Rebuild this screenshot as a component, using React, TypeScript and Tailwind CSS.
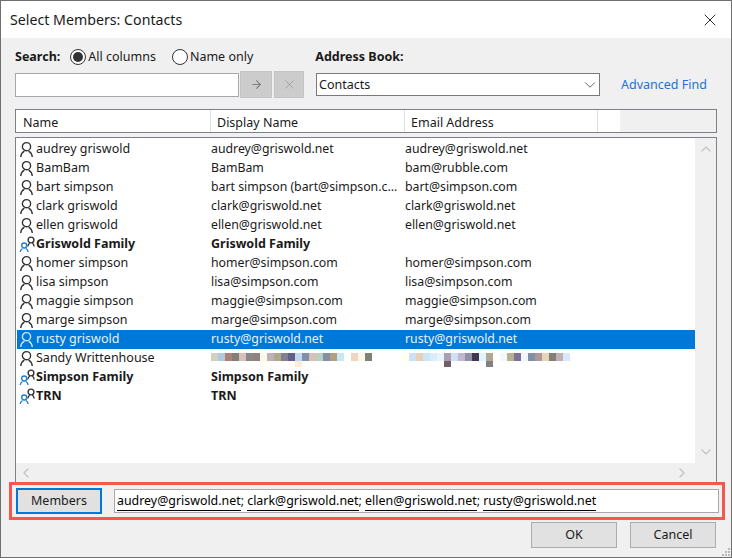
import React from "react";
import { ArrowRight, ChevronDown, ChevronLeft, ChevronRight, ChevronUp, X } from "lucide-react";

type Row = { name: string; display?: string; email?: string; group?: boolean; selected?: boolean; blurred?: boolean };

const rows: Row[] = [
  { name: "audrey griswold", display: "audrey@griswold.net", email: "audrey@griswold.net" },
  { name: "BamBam", display: "BamBam", email: "bam@rubble.com" },
  { name: "bart simpson", display: "bart simpson (bart@simpson.c...", email: "bart@simpson.com" },
  { name: "clark griswold", display: "clark@griswold.net", email: "clark@griswold.net" },
  { name: "ellen griswold", display: "ellen@griswold.net", email: "ellen@griswold.net" },
  { name: "Griswold Family", display: "Griswold Family", group: true },
  { name: "homer simpson", display: "homer@simpson.com", email: "homer@simpson.com" },
  { name: "lisa simpson", display: "lisa@simpson.com", email: "lisa@simpson.com" },
  { name: "maggie simpson", display: "maggie@simpson.com", email: "maggie@simpson.com" },
  { name: "marge simpson", display: "marge@simpson.com", email: "marge@simpson.com" },
  { name: "rusty griswold", display: "rusty@griswold.net", email: "rusty@griswold.net", selected: true },
  { name: "Sandy Writtenhouse", blurred: true },
  { name: "Simpson Family", display: "Simpson Family", group: true },
  { name: "TRN", display: "TRN", group: true },
];

// pixelated (redacted) address: one entry per block, the second colour hangs below it
type Cell = [string, string?];

const blurDisplay: Cell[] = [
  ["bg-[#d2d0c0]"], ["bg-[#b0c8e0]"], ["bg-[#b08078]"], ["bg-[#808078]"], ["bg-[#d8c0b8]"], ["bg-[#888888]"],
  ["bg-[#908080]"], ["bg-[#fbf8ec]", "bg-[#fffff0]"], ["bg-[#c0b0b8]"], ["bg-[#b0a888]"], ["bg-[#808090]"],
  ["bg-[#606088]"], ["bg-[#c0d8f0]", "bg-[#fdebd8]"], ["bg-[#8090a8]"], ["bg-[#d8c0b8]"], ["bg-[#b8d0c0]"],
  ["bg-[#8090a8]"], ["bg-[#b0a080]"], ["bg-[#c8e8f8]"], ["bg-white"], ["bg-[#f0d8c0]"], ["bg-[#fbf8e8]"],
  ["bg-[#808078]"],
];
const blurEmail: Cell[] = [
  ["bg-[#fffff0]"], ["bg-[#d0e0f4]"], ["bg-[#e8d0b8]"], ["bg-[#c8e8f8]"], ["bg-[#dcecfc]"], ["bg-[#e8f4fc]"],
  ["bg-[#a8a0b0]", "bg-[#706068]"], ["bg-[#d0e0f4]"], ["bg-[#c0b8d0]"], ["bg-[#9090a8]"], ["bg-[#403850]"],
  ["bg-[#e4f4fc]"], ["bg-[#b0a890]", "bg-[#808080]"], ["bg-white"], ["bg-[#f0fafc]"], ["bg-[#b8b090]"],
  ["bg-[#807098]"], ["bg-[#f0f8fc]"], ["bg-[#8090a8]"], ["bg-[#b09898]"], ["bg-[#e8d4b8]"], ["bg-[#808078]"],
  ["bg-[#c0b0b0]"], ["bg-[#d8e8fc]"],
];

function PersonIcon({ light }: { light?: boolean }) {
  const color = light ? "#cfe4f7" : "#333333";
  return (
    <svg width="16" height="17" viewBox="0 0 16 17" fill="none" stroke={color} strokeWidth="1.4" className="-mt-[2px] shrink-0">
      <circle cx="6.500" cy="6.700" r="4.100" />
      <path d="M.7 17c.3-2.800 1.800-4.800 3.700-5.800M12.300 17c-.3-2.800-1.800-4.800-3.700-5.800" />
    </svg>
  );
}

function GroupIcon() {
  return (
    <svg width="16" height="17" viewBox="-1 0 16 17" fill="none" strokeWidth="1.4" className="-mt-[2px] shrink-0 overflow-visible">
      <g stroke="#333333">
        <circle cx="10" cy="5" r="2.900" />
        <path d="M6.800 11.500c.2-1.700.9-2.800 1.900-3.500M13.200 11.500c-.2-1.700-.9-2.800-1.900-3.500" />
      </g>
      <g stroke="#1f7fd0">
        <circle cx="3.200" cy="10.500" r="2.500" />
        <path d="M-.700 17c.1-1.700.9-2.800 2.200-3.500M7.100 17c-.1-1.700-.9-2.800-2.200-3.500" />
      </g>
    </svg>
  );
}

function Radio({ checked, label }: { checked?: boolean; label: string }) {
  return (
    <div className="flex items-center gap-[2px]">
      <span className="flex h-[16px] w-[16px] items-center justify-center rounded-full border border-[#333333] bg-white">
        {checked && <span className="h-[10px] w-[10px] rounded-full bg-[#333333]" />}
      </span>
      <span>{label}</span>
    </div>
  );
}

function Blur({ cells }: { cells: Cell[] }) {
  return (
    <div className="flex h-[14px] self-start">
      {cells.map(([top, below], i) => (
        <span key={i} className="flex w-[7px] flex-col">
          <span className={`h-[8px] ${top}`} />
          {below && <span className={`h-[6px] ${below}`} />}
        </span>
      ))}
    </div>
  );
}

function ContactRow({ row }: { row: Row }) {
  const cellText = row.group ? "" : "text-[12.3px]";
  return (
    <div
      className={`flex h-[19px] items-center pl-[3px] ${row.selected ? "bg-[#0078d7] text-[#e8f2fb]" : "text-[#1a1a1a]"} ${row.group ? "font-bold" : ""}`}
    >
      {row.group ? <GroupIcon /> : <PersonIcon light={row.selected} />}
      <span className="w-[175px] shrink-0 whitespace-nowrap">{row.name}</span>
      {row.blurred ? (
        <>
          <div className="flex w-[191px] shrink-0 self-start pt-[4px]"><Blur cells={blurDisplay} /></div>
          <div className="flex self-start pt-[4px]"><Blur cells={blurEmail} /></div>
        </>
      ) : (
        <>
          <span className={`w-[194px] shrink-0 whitespace-nowrap ${cellText}`}>{row.display}</span>
          <span className={`whitespace-nowrap ${cellText}`}>{row.email}</span>
        </>
      )}
    </div>
  );
}

const members = ["audrey@griswold.net", "clark@griswold.net", "ellen@griswold.net", "rusty@griswold.net"];

export default function App() {
  return (
    <div className="flex h-[558px] w-[732px] flex-col border border-[#6f6f6f] bg-[#f0f0f0] text-[12.5px] leading-none text-[#1a1a1a] [font-family:'Noto_Sans','Open_Sans',sans-serif]">
      {/* title bar */}
      <div className="flex h-[37px] shrink-0 items-center justify-between bg-white pl-[9px] pr-[11px]">
        <span className="pt-[1px] text-[14.2px]">Select Members: Contacts</span>
        <X size={20} strokeWidth={1} className="text-black" />
      </div>

      {/* search */}
      <div className="mt-[10px] flex h-[18px] items-center pl-[14px]">
        <span className="mr-[10px] font-bold">Search:</span>
        <Radio checked label="All columns" />
        <div className="w-[16px]" />
        <Radio label="Name only" />
        <span className="ml-[62px] font-bold">Address Book:</span>
      </div>
      <div className="mt-[6px] flex h-[25px] items-center pl-[14px]">
        <div className="h-[24px] w-[224px] border border-[#a8a8a8] bg-white" />
        <button className="ml-[1px] flex h-[27px] w-[32px] items-center justify-center border border-[#c4c4c4] bg-[#cccccc] text-[#808080]">
          <ArrowRight size={13} />
        </button>
        <button className="ml-[2px] flex h-[27px] w-[30px] items-center justify-center border border-[#c4c4c4] bg-[#cccccc] text-[#8c8c8c]">
          <X size={15} strokeWidth={1} />
        </button>
        <div className="ml-[12px] flex h-[23px] w-[284px] items-center justify-between border border-[#7a7a7a] bg-white pl-[2px]">
          <span className="pt-[2px]">Contacts</span>
          <ChevronDown size={18} strokeWidth={1} className="text-[#333333]" />
        </div>
        <span className="ml-[21px] pt-[2px] text-[#1a73d8]">Advanced Find</span>
      </div>

      {/* column headers */}
      <div className="ml-[14px] mt-[12px] flex h-[24px] w-[702px] items-center border border-[#7f7f87] bg-white">
        <span className="flex h-full w-[195px] items-center border-r border-[#e0e0e0] pl-[7px] pt-[4px]">Name</span>
        <span className="flex h-full w-[194px] items-center border-r border-[#e0e0e0] pl-[6px] pt-[4px]">Display Name</span>
        <span className="flex h-full w-[193px] items-center border-r border-[#e0e0e0] pl-[6px] pt-[4px]">Email Address</span>
        <div className="w-[22px]" />
        <div className="h-full flex-1 bg-[#f0f0f0]" />
      </div>

      {/* contact list */}
      <div className="ml-[14px] mt-[4px] flex h-[346px] w-[702px] flex-col border-x border-t border-[#7f7f87] bg-[#f0f0f0]">
        <div className="flex min-h-0 flex-1">
          <div className="flex-1 bg-white pl-[1px] pt-[1px]">
            <div className="pt-[1px]">
              {rows.map((r) => (
                <ContactRow key={r.name} row={r} />
              ))}
            </div>
          </div>
          <div className="flex w-[21px] flex-col items-center justify-between py-[3px] text-[#c4c4c4]">
            <ChevronUp size={16} strokeWidth={2} />
            <ChevronDown size={16} strokeWidth={2} />
          </div>
        </div>
        <div className="flex h-[20px] shrink-0 items-center justify-between pl-[2px] pr-[26px] text-[#c4c4c4]">
          <ChevronLeft size={16} strokeWidth={2} />
          <ChevronRight size={16} strokeWidth={2} />
        </div>
      </div>

      {/* members */}
      <div className="relative z-10 -mt-[1px] ml-[8px] flex h-[38px] w-[716px] items-center border-[3px] border-[#f4574d] pl-[4px] pr-[3px]">
        <button className="h-[26px] w-[86px] shrink-0 border-2 border-[#0078d7] bg-[#e1e1e1] pt-[1px]">Members</button>
        <div className="ml-[12px] flex h-[24px] flex-1 items-center border border-[#a8a8a8] bg-white pl-[2px] text-[12.4px]">
          {members.map((m, i) => (
            <span key={m} className="whitespace-pre">
              <span className="border-b border-black pb-[1px] text-black">{m}</span>
              {i < members.length - 1 ? "; " : ""}
            </span>
          ))}
        </div>
      </div>

      {/* footer */}
      <div className="relative mt-[2px] flex flex-1 justify-end gap-[13px] pr-[15px]">
        <button className="h-[26px] w-[86px] border border-[#adadad] bg-[#e1e1e1] pt-[1px]">OK</button>
        <button className="h-[26px] w-[86px] border border-[#adadad] bg-[#e1e1e1] pt-[1px]">Cancel</button>
        <div className="absolute bottom-[1px] right-[1px] grid grid-cols-3 gap-[1px]">
          <span />
          <span />
          <span className="h-[2px] w-[2px] bg-[#b8b8b8]" />
          <span />
          <span className="h-[2px] w-[2px] bg-[#b8b8b8]" />
          <span className="h-[2px] w-[2px] bg-[#b8b8b8]" />
          <span className="h-[2px] w-[2px] bg-[#b8b8b8]" />
          <span className="h-[2px] w-[2px] bg-[#b8b8b8]" />
          <span className="h-[2px] w-[2px] bg-[#b8b8b8]" />
        </div>
      </div>
    </div>
  );
}
